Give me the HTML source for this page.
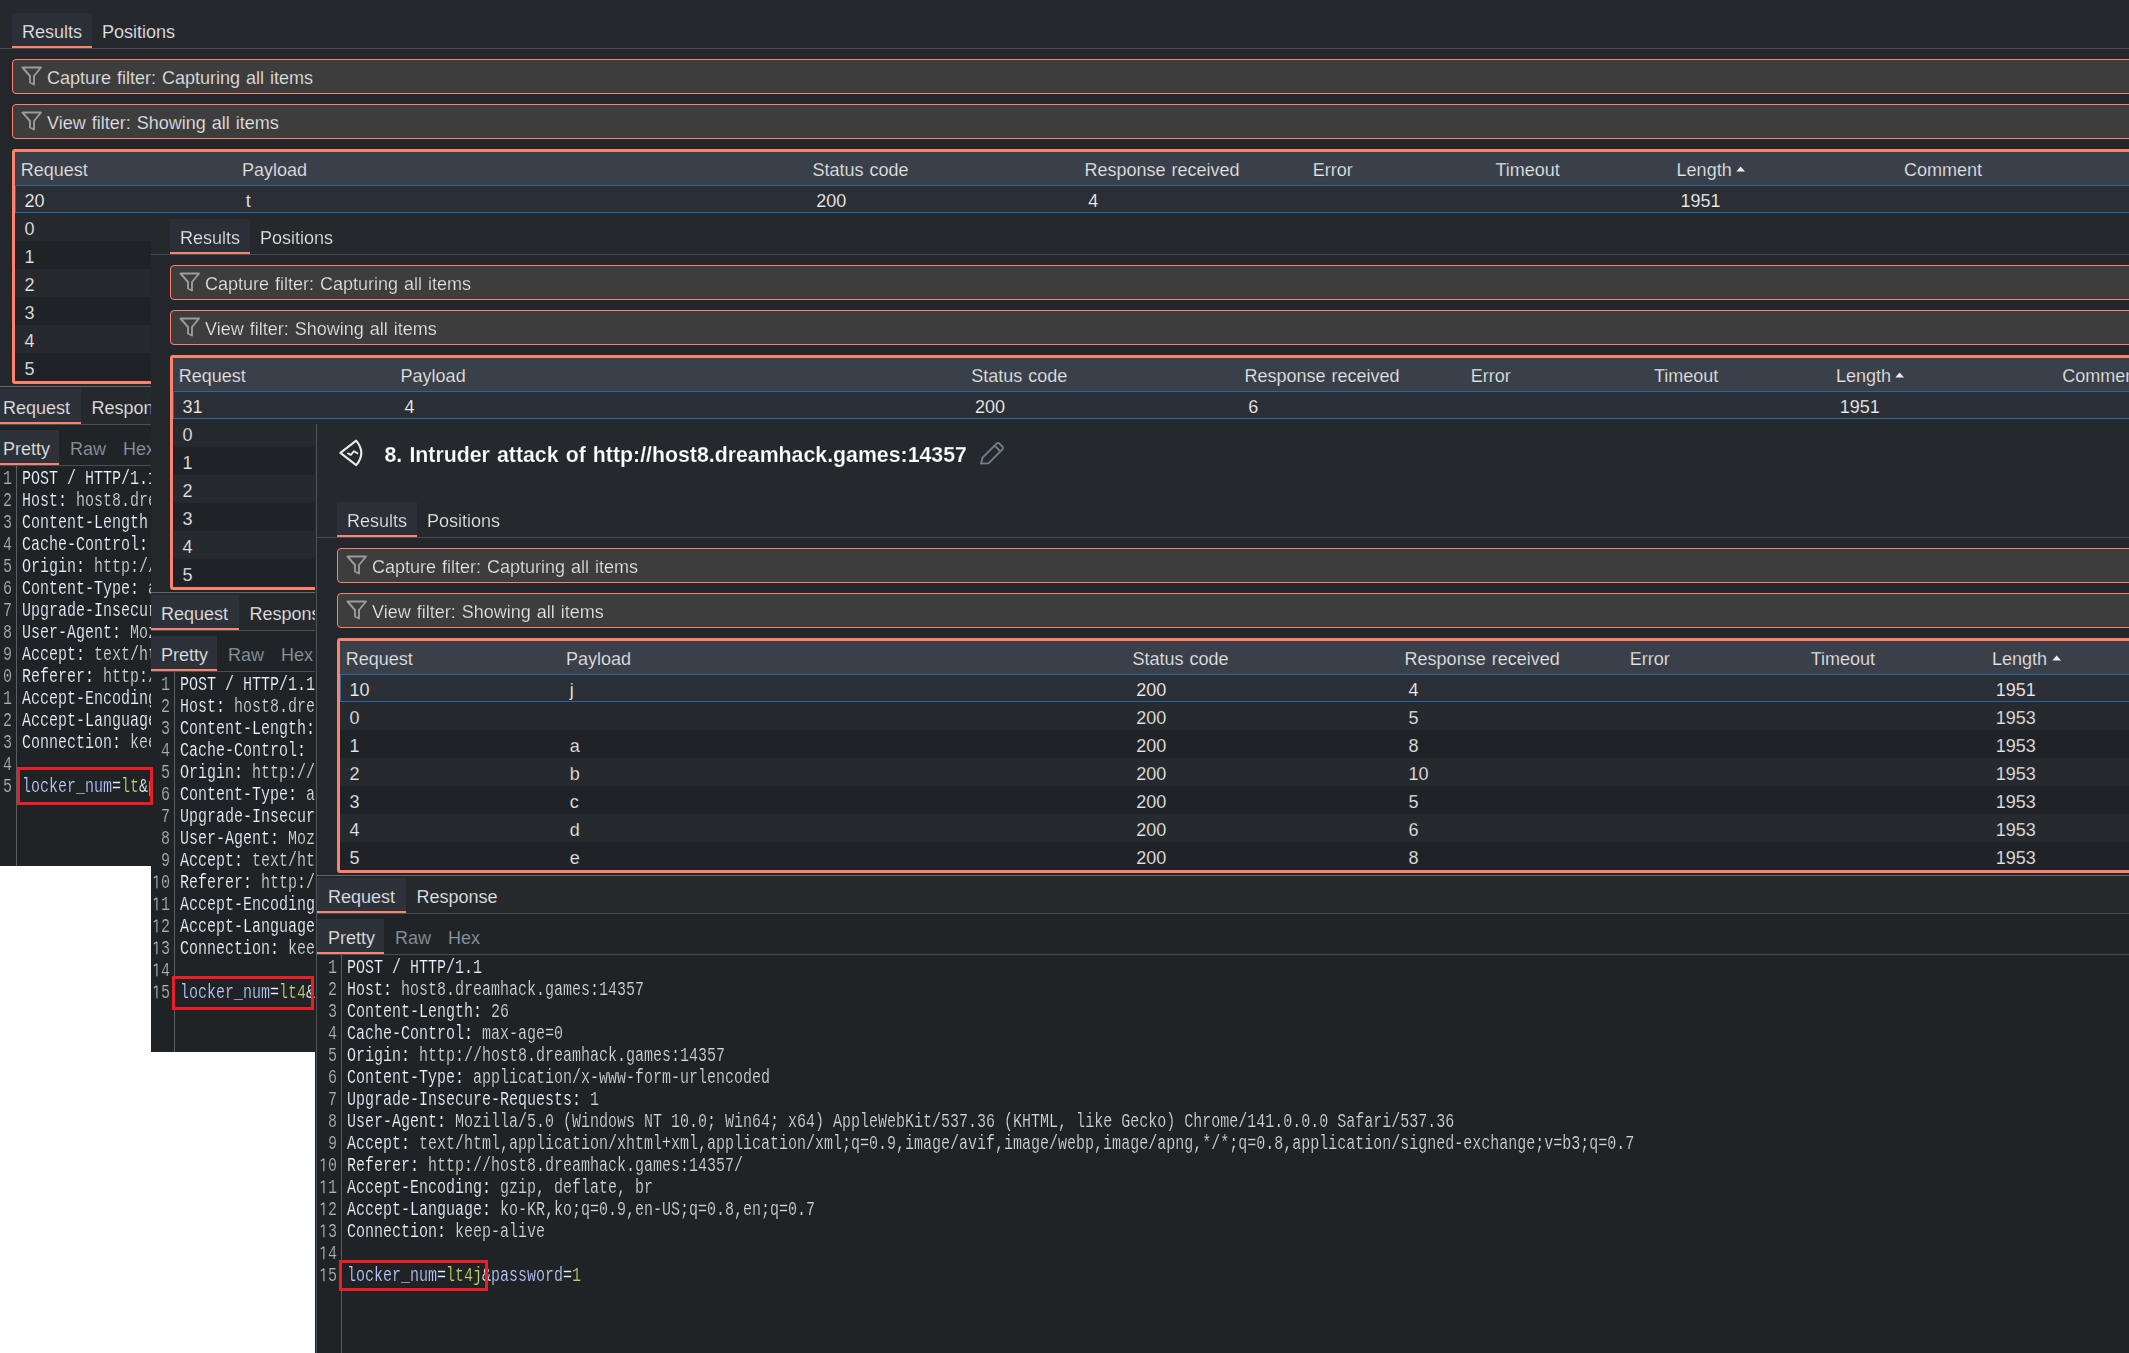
<!DOCTYPE html>
<html><head><meta charset="utf-8"><title>Intruder attack</title>
<style>html,body{margin:0;padding:0}body{width:2129px;height:1353px;position:relative;overflow:hidden;background:#ffffff}</style>
</head><body>
<div style="position:absolute;left:0px;top:0px;width:2129px;height:866px;overflow:hidden;"><div style="position:absolute;left:0px;top:0px;width:0;height:0"><div style="position:absolute;left:-20px;top:-90px;width:2300px;height:138px;background:#25292d;"></div><div style="position:absolute;left:-8px;top:48px;width:2300px;height:1px;background:#474e56;"></div><div style="position:absolute;left:-20px;top:49px;width:2300px;height:337px;background:#23272b;"></div><div style="position:absolute;left:12px;top:13px;width:80px;height:33px;background:#2b2f37;"></div><div style="position:absolute;left:12px;top:46px;width:80px;height:2px;background:#fb826c;"></div><div style="position:absolute;left:22px;top:22.76px;font:normal 18px/18px 'Liberation Sans', sans-serif;color:#e6e6e6;white-space:pre;word-spacing:1px;-webkit-text-stroke:0.25px rgba(36,40,46,0.7);">Results</div><div style="position:absolute;left:102px;top:22.76px;font:normal 18px/18px 'Liberation Sans', sans-serif;color:#e6e6e6;white-space:pre;word-spacing:1px;-webkit-text-stroke:0.25px rgba(36,40,46,0.7);">Positions</div><div style="position:absolute;left:12px;top:59px;width:2300px;height:33px;background:#3d3d3d;border:1px solid #fb826c;border-radius:4px"></div><svg style="position:absolute;left:21px;top:66px" width="22" height="20" viewBox="0 0 22 20"><path d="M1.5 1.5 H20 L13 10 V18.5 L9 16.5 V10 Z" fill="none" stroke="#9b9b9b" stroke-width="1.9" stroke-linejoin="round"/></svg><div style="position:absolute;left:47px;top:68.96px;font:normal 18px/18px 'Liberation Sans', sans-serif;color:#e6e6e6;white-space:pre;word-spacing:1px;-webkit-text-stroke:0.25px rgba(36,40,46,0.7);">Capture filter: Capturing all items</div><div style="position:absolute;left:12px;top:104px;width:2300px;height:33px;background:#3d3d3d;border:1px solid #fb826c;border-radius:4px"></div><svg style="position:absolute;left:21px;top:111px" width="22" height="20" viewBox="0 0 22 20"><path d="M1.5 1.5 H20 L13 10 V18.5 L9 16.5 V10 Z" fill="none" stroke="#9b9b9b" stroke-width="1.9" stroke-linejoin="round"/></svg><div style="position:absolute;left:47px;top:113.96px;font:normal 18px/18px 'Liberation Sans', sans-serif;color:#e6e6e6;white-space:pre;word-spacing:1px;-webkit-text-stroke:0.25px rgba(36,40,46,0.7);">View filter: Showing all items</div><div style="position:absolute;left:12px;top:149px;width:2300px;height:229px;border:3px solid #fb826c;border-radius:3px;background:#262a2e"></div><div style="position:absolute;left:15px;top:152px;width:2300px;height:33px;background:#39404a;"></div><div style="position:absolute;left:20.7px;top:160.76px;font:normal 18px/18px 'Liberation Sans', sans-serif;color:#e6e6e6;white-space:pre;word-spacing:1px;-webkit-text-stroke:0.25px rgba(36,40,46,0.7);">Request</div><div style="position:absolute;left:242px;top:160.76px;font:normal 18px/18px 'Liberation Sans', sans-serif;color:#e6e6e6;white-space:pre;word-spacing:1px;-webkit-text-stroke:0.25px rgba(36,40,46,0.7);">Payload</div><div style="position:absolute;left:812.4px;top:160.76px;font:normal 18px/18px 'Liberation Sans', sans-serif;color:#e6e6e6;white-space:pre;word-spacing:1px;-webkit-text-stroke:0.25px rgba(36,40,46,0.7);">Status code</div><div style="position:absolute;left:1084.4px;top:160.76px;font:normal 18px/18px 'Liberation Sans', sans-serif;color:#e6e6e6;white-space:pre;word-spacing:1px;-webkit-text-stroke:0.25px rgba(36,40,46,0.7);">Response received</div><div style="position:absolute;left:1312.7px;top:160.76px;font:normal 18px/18px 'Liberation Sans', sans-serif;color:#e6e6e6;white-space:pre;word-spacing:1px;-webkit-text-stroke:0.25px rgba(36,40,46,0.7);">Error</div><div style="position:absolute;left:1495.4px;top:160.76px;font:normal 18px/18px 'Liberation Sans', sans-serif;color:#e6e6e6;white-space:pre;word-spacing:1px;-webkit-text-stroke:0.25px rgba(36,40,46,0.7);">Timeout</div><div style="position:absolute;left:1676.6px;top:160.76px;font:normal 18px/18px 'Liberation Sans', sans-serif;color:#e6e6e6;white-space:pre;word-spacing:1px;-webkit-text-stroke:0.25px rgba(36,40,46,0.7);">Length</div><div style="position:absolute;left:1904px;top:160.76px;font:normal 18px/18px 'Liberation Sans', sans-serif;color:#e6e6e6;white-space:pre;word-spacing:1px;-webkit-text-stroke:0.25px rgba(36,40,46,0.7);">Comment</div><svg style="position:absolute;left:1736.1px;top:165.5px" width="10" height="7" viewBox="0 0 10 7"><path d="M0.3 5.6 L4.65 0.4 L9 5.6 Z" fill="#ececec"/></svg><div style="position:absolute;left:15px;top:185px;width:2300px;height:28px;background:#2866a5;"></div><div style="position:absolute;left:16px;top:186px;width:2300px;height:26px;background:#2a2e35;"></div><div style="position:absolute;left:24.5px;top:191.76px;font:normal 18px/18px 'Liberation Sans', sans-serif;color:#f2f2f2;white-space:pre;word-spacing:1px;-webkit-text-stroke:0.25px rgba(36,40,46,0.7);">20</div><div style="position:absolute;left:245.8px;top:191.76px;font:normal 18px/18px 'Liberation Sans', sans-serif;color:#f2f2f2;white-space:pre;word-spacing:1px;-webkit-text-stroke:0.25px rgba(36,40,46,0.7);">t</div><div style="position:absolute;left:816.1999999999999px;top:191.76px;font:normal 18px/18px 'Liberation Sans', sans-serif;color:#f2f2f2;white-space:pre;word-spacing:1px;-webkit-text-stroke:0.25px rgba(36,40,46,0.7);">200</div><div style="position:absolute;left:1088.2px;top:191.76px;font:normal 18px/18px 'Liberation Sans', sans-serif;color:#f2f2f2;white-space:pre;word-spacing:1px;-webkit-text-stroke:0.25px rgba(36,40,46,0.7);">4</div><div style="position:absolute;left:1680.3999999999999px;top:191.76px;font:normal 18px/18px 'Liberation Sans', sans-serif;color:#f2f2f2;white-space:pre;word-spacing:1px;-webkit-text-stroke:0.25px rgba(36,40,46,0.7);">1951</div><div style="position:absolute;left:15px;top:213px;width:2300px;height:28px;background:#262a2e;"></div><div style="position:absolute;left:24.5px;top:219.76px;font:normal 18px/18px 'Liberation Sans', sans-serif;color:#e6e6e6;white-space:pre;word-spacing:1px;-webkit-text-stroke:0.25px rgba(36,40,46,0.7);">0</div><div style="position:absolute;left:816.1999999999999px;top:219.76px;font:normal 18px/18px 'Liberation Sans', sans-serif;color:#e6e6e6;white-space:pre;word-spacing:1px;-webkit-text-stroke:0.25px rgba(36,40,46,0.7);">200</div><div style="position:absolute;left:1088.2px;top:219.76px;font:normal 18px/18px 'Liberation Sans', sans-serif;color:#e6e6e6;white-space:pre;word-spacing:1px;-webkit-text-stroke:0.25px rgba(36,40,46,0.7);">5</div><div style="position:absolute;left:1680.3999999999999px;top:219.76px;font:normal 18px/18px 'Liberation Sans', sans-serif;color:#e6e6e6;white-space:pre;word-spacing:1px;-webkit-text-stroke:0.25px rgba(36,40,46,0.7);">1953</div><div style="position:absolute;left:15px;top:241px;width:2300px;height:28px;background:#1f2226;"></div><div style="position:absolute;left:24.5px;top:247.76px;font:normal 18px/18px 'Liberation Sans', sans-serif;color:#e6e6e6;white-space:pre;word-spacing:1px;-webkit-text-stroke:0.25px rgba(36,40,46,0.7);">1</div><div style="position:absolute;left:245.8px;top:247.76px;font:normal 18px/18px 'Liberation Sans', sans-serif;color:#e6e6e6;white-space:pre;word-spacing:1px;-webkit-text-stroke:0.25px rgba(36,40,46,0.7);">a</div><div style="position:absolute;left:816.1999999999999px;top:247.76px;font:normal 18px/18px 'Liberation Sans', sans-serif;color:#e6e6e6;white-space:pre;word-spacing:1px;-webkit-text-stroke:0.25px rgba(36,40,46,0.7);">200</div><div style="position:absolute;left:1088.2px;top:247.76px;font:normal 18px/18px 'Liberation Sans', sans-serif;color:#e6e6e6;white-space:pre;word-spacing:1px;-webkit-text-stroke:0.25px rgba(36,40,46,0.7);">8</div><div style="position:absolute;left:1680.3999999999999px;top:247.76px;font:normal 18px/18px 'Liberation Sans', sans-serif;color:#e6e6e6;white-space:pre;word-spacing:1px;-webkit-text-stroke:0.25px rgba(36,40,46,0.7);">1953</div><div style="position:absolute;left:15px;top:269px;width:2300px;height:28px;background:#262a2e;"></div><div style="position:absolute;left:24.5px;top:275.76px;font:normal 18px/18px 'Liberation Sans', sans-serif;color:#e6e6e6;white-space:pre;word-spacing:1px;-webkit-text-stroke:0.25px rgba(36,40,46,0.7);">2</div><div style="position:absolute;left:245.8px;top:275.76px;font:normal 18px/18px 'Liberation Sans', sans-serif;color:#e6e6e6;white-space:pre;word-spacing:1px;-webkit-text-stroke:0.25px rgba(36,40,46,0.7);">b</div><div style="position:absolute;left:816.1999999999999px;top:275.76px;font:normal 18px/18px 'Liberation Sans', sans-serif;color:#e6e6e6;white-space:pre;word-spacing:1px;-webkit-text-stroke:0.25px rgba(36,40,46,0.7);">200</div><div style="position:absolute;left:1088.2px;top:275.76px;font:normal 18px/18px 'Liberation Sans', sans-serif;color:#e6e6e6;white-space:pre;word-spacing:1px;-webkit-text-stroke:0.25px rgba(36,40,46,0.7);">10</div><div style="position:absolute;left:1680.3999999999999px;top:275.76px;font:normal 18px/18px 'Liberation Sans', sans-serif;color:#e6e6e6;white-space:pre;word-spacing:1px;-webkit-text-stroke:0.25px rgba(36,40,46,0.7);">1953</div><div style="position:absolute;left:15px;top:297px;width:2300px;height:28px;background:#1f2226;"></div><div style="position:absolute;left:24.5px;top:303.76px;font:normal 18px/18px 'Liberation Sans', sans-serif;color:#e6e6e6;white-space:pre;word-spacing:1px;-webkit-text-stroke:0.25px rgba(36,40,46,0.7);">3</div><div style="position:absolute;left:245.8px;top:303.76px;font:normal 18px/18px 'Liberation Sans', sans-serif;color:#e6e6e6;white-space:pre;word-spacing:1px;-webkit-text-stroke:0.25px rgba(36,40,46,0.7);">c</div><div style="position:absolute;left:816.1999999999999px;top:303.76px;font:normal 18px/18px 'Liberation Sans', sans-serif;color:#e6e6e6;white-space:pre;word-spacing:1px;-webkit-text-stroke:0.25px rgba(36,40,46,0.7);">200</div><div style="position:absolute;left:1088.2px;top:303.76px;font:normal 18px/18px 'Liberation Sans', sans-serif;color:#e6e6e6;white-space:pre;word-spacing:1px;-webkit-text-stroke:0.25px rgba(36,40,46,0.7);">5</div><div style="position:absolute;left:1680.3999999999999px;top:303.76px;font:normal 18px/18px 'Liberation Sans', sans-serif;color:#e6e6e6;white-space:pre;word-spacing:1px;-webkit-text-stroke:0.25px rgba(36,40,46,0.7);">1953</div><div style="position:absolute;left:15px;top:325px;width:2300px;height:28px;background:#262a2e;"></div><div style="position:absolute;left:24.5px;top:331.76px;font:normal 18px/18px 'Liberation Sans', sans-serif;color:#e6e6e6;white-space:pre;word-spacing:1px;-webkit-text-stroke:0.25px rgba(36,40,46,0.7);">4</div><div style="position:absolute;left:245.8px;top:331.76px;font:normal 18px/18px 'Liberation Sans', sans-serif;color:#e6e6e6;white-space:pre;word-spacing:1px;-webkit-text-stroke:0.25px rgba(36,40,46,0.7);">d</div><div style="position:absolute;left:816.1999999999999px;top:331.76px;font:normal 18px/18px 'Liberation Sans', sans-serif;color:#e6e6e6;white-space:pre;word-spacing:1px;-webkit-text-stroke:0.25px rgba(36,40,46,0.7);">200</div><div style="position:absolute;left:1088.2px;top:331.76px;font:normal 18px/18px 'Liberation Sans', sans-serif;color:#e6e6e6;white-space:pre;word-spacing:1px;-webkit-text-stroke:0.25px rgba(36,40,46,0.7);">6</div><div style="position:absolute;left:1680.3999999999999px;top:331.76px;font:normal 18px/18px 'Liberation Sans', sans-serif;color:#e6e6e6;white-space:pre;word-spacing:1px;-webkit-text-stroke:0.25px rgba(36,40,46,0.7);">1953</div><div style="position:absolute;left:15px;top:353px;width:2300px;height:28px;background:#1f2226;"></div><div style="position:absolute;left:24.5px;top:359.76px;font:normal 18px/18px 'Liberation Sans', sans-serif;color:#e6e6e6;white-space:pre;word-spacing:1px;-webkit-text-stroke:0.25px rgba(36,40,46,0.7);">5</div><div style="position:absolute;left:245.8px;top:359.76px;font:normal 18px/18px 'Liberation Sans', sans-serif;color:#e6e6e6;white-space:pre;word-spacing:1px;-webkit-text-stroke:0.25px rgba(36,40,46,0.7);">e</div><div style="position:absolute;left:816.1999999999999px;top:359.76px;font:normal 18px/18px 'Liberation Sans', sans-serif;color:#e6e6e6;white-space:pre;word-spacing:1px;-webkit-text-stroke:0.25px rgba(36,40,46,0.7);">200</div><div style="position:absolute;left:1088.2px;top:359.76px;font:normal 18px/18px 'Liberation Sans', sans-serif;color:#e6e6e6;white-space:pre;word-spacing:1px;-webkit-text-stroke:0.25px rgba(36,40,46,0.7);">8</div><div style="position:absolute;left:1680.3999999999999px;top:359.76px;font:normal 18px/18px 'Liberation Sans', sans-serif;color:#e6e6e6;white-space:pre;word-spacing:1px;-webkit-text-stroke:0.25px rgba(36,40,46,0.7);">1953</div><div style="position:absolute;left:-20px;top:385px;width:2300px;height:1px;background:#23272b;"></div><div style="position:absolute;left:-8px;top:386px;width:2300px;height:1px;background:#66686a;"></div><div style="position:absolute;left:-20px;top:387px;width:2300px;height:37px;background:#25292c;"></div><div style="position:absolute;left:-8px;top:389px;width:89px;height:33px;background:#2d3139;"></div><div style="position:absolute;left:-8px;top:422px;width:89px;height:2px;background:#fb826c;"></div><div style="position:absolute;left:-8px;top:424px;width:2300px;height:1px;background:#474e56;"></div><div style="position:absolute;left:3px;top:399.16px;font:normal 18px/18px 'Liberation Sans', sans-serif;color:#e6e6e6;white-space:pre;word-spacing:1px;-webkit-text-stroke:0.25px rgba(36,40,46,0.7);">Request</div><div style="position:absolute;left:91.5px;top:399.16px;font:normal 18px/18px 'Liberation Sans', sans-serif;color:#e6e6e6;white-space:pre;word-spacing:1px;-webkit-text-stroke:0.25px rgba(36,40,46,0.7);">Response</div><div style="position:absolute;left:-20px;top:425px;width:2300px;height:40px;background:#202427;"></div><div style="position:absolute;left:-8px;top:430px;width:67px;height:33px;background:#2d3239;"></div><div style="position:absolute;left:-8px;top:463px;width:67px;height:2px;background:#fb826c;"></div><div style="position:absolute;left:-8px;top:465px;width:2300px;height:1px;background:#474e56;"></div><div style="position:absolute;left:3px;top:440.16px;font:normal 18px/18px 'Liberation Sans', sans-serif;color:#e6e6e6;white-space:pre;word-spacing:1px;-webkit-text-stroke:0.25px rgba(36,40,46,0.7);">Pretty</div><div style="position:absolute;left:70px;top:440.16px;font:normal 18px/18px 'Liberation Sans', sans-serif;color:#8e97a0;white-space:pre;word-spacing:1px;-webkit-text-stroke:0.25px rgba(36,40,46,0.7);">Raw</div><div style="position:absolute;left:123px;top:440.16px;font:normal 18px/18px 'Liberation Sans', sans-serif;color:#8e97a0;white-space:pre;word-spacing:1px;-webkit-text-stroke:0.25px rgba(36,40,46,0.7);">Hex</div><div style="position:absolute;left:-20px;top:466px;width:2300px;height:1200px;background:#1f2326;"></div><div style="position:absolute;left:16px;top:466px;width:1px;height:1200px;background:#5c5f62;"></div><div style="position:absolute;left:3px;top:469.28px;font:20px/20px 'Liberation Mono', monospace;white-space:pre;transform:scaleX(0.75000) translateZ(0);transform-origin:0 0;-webkit-text-stroke:0.2px #1f2326"><span style="color:#b0b0b0">1</span></div><div style="position:absolute;left:22px;top:469.28px;font:20px/20px 'Liberation Mono', monospace;white-space:pre;transform:scaleX(0.75000) translateZ(0);transform-origin:0 0;-webkit-text-stroke:0.2px #1f2326"><span style="color:#eaf4ff">POST / HTTP/1.1</span></div><div style="position:absolute;left:3px;top:491.28px;font:20px/20px 'Liberation Mono', monospace;white-space:pre;transform:scaleX(0.75000) translateZ(0);transform-origin:0 0;-webkit-text-stroke:0.2px #1f2326"><span style="color:#b0b0b0">2</span></div><div style="position:absolute;left:22px;top:491.28px;font:20px/20px 'Liberation Mono', monospace;white-space:pre;transform:scaleX(0.75000) translateZ(0);transform-origin:0 0;-webkit-text-stroke:0.2px #1f2326"><span style="color:#eaf4ff">Host: </span><span style="color:#d4d4d0">host8.dreamhack.games:14357</span></div><div style="position:absolute;left:3px;top:513.27px;font:20px/20px 'Liberation Mono', monospace;white-space:pre;transform:scaleX(0.75000) translateZ(0);transform-origin:0 0;-webkit-text-stroke:0.2px #1f2326"><span style="color:#b0b0b0">3</span></div><div style="position:absolute;left:22px;top:513.27px;font:20px/20px 'Liberation Mono', monospace;white-space:pre;transform:scaleX(0.75000) translateZ(0);transform-origin:0 0;-webkit-text-stroke:0.2px #1f2326"><span style="color:#eaf4ff">Content-Length: </span><span style="color:#d4d4d0">24</span></div><div style="position:absolute;left:3px;top:535.27px;font:20px/20px 'Liberation Mono', monospace;white-space:pre;transform:scaleX(0.75000) translateZ(0);transform-origin:0 0;-webkit-text-stroke:0.2px #1f2326"><span style="color:#b0b0b0">4</span></div><div style="position:absolute;left:22px;top:535.27px;font:20px/20px 'Liberation Mono', monospace;white-space:pre;transform:scaleX(0.75000) translateZ(0);transform-origin:0 0;-webkit-text-stroke:0.2px #1f2326"><span style="color:#eaf4ff">Cache-Control: </span><span style="color:#d4d4d0">max-age=0</span></div><div style="position:absolute;left:3px;top:557.27px;font:20px/20px 'Liberation Mono', monospace;white-space:pre;transform:scaleX(0.75000) translateZ(0);transform-origin:0 0;-webkit-text-stroke:0.2px #1f2326"><span style="color:#b0b0b0">5</span></div><div style="position:absolute;left:22px;top:557.27px;font:20px/20px 'Liberation Mono', monospace;white-space:pre;transform:scaleX(0.75000) translateZ(0);transform-origin:0 0;-webkit-text-stroke:0.2px #1f2326"><span style="color:#eaf4ff">Origin: </span><span style="color:#d4d4d0">http://host8.dreamhack.games:14357</span></div><div style="position:absolute;left:3px;top:579.27px;font:20px/20px 'Liberation Mono', monospace;white-space:pre;transform:scaleX(0.75000) translateZ(0);transform-origin:0 0;-webkit-text-stroke:0.2px #1f2326"><span style="color:#b0b0b0">6</span></div><div style="position:absolute;left:22px;top:579.27px;font:20px/20px 'Liberation Mono', monospace;white-space:pre;transform:scaleX(0.75000) translateZ(0);transform-origin:0 0;-webkit-text-stroke:0.2px #1f2326"><span style="color:#eaf4ff">Content-Type: </span><span style="color:#d4d4d0">application/x-www-form-urlencoded</span></div><div style="position:absolute;left:3px;top:601.27px;font:20px/20px 'Liberation Mono', monospace;white-space:pre;transform:scaleX(0.75000) translateZ(0);transform-origin:0 0;-webkit-text-stroke:0.2px #1f2326"><span style="color:#b0b0b0">7</span></div><div style="position:absolute;left:22px;top:601.27px;font:20px/20px 'Liberation Mono', monospace;white-space:pre;transform:scaleX(0.75000) translateZ(0);transform-origin:0 0;-webkit-text-stroke:0.2px #1f2326"><span style="color:#eaf4ff">Upgrade-Insecure-Requests: </span><span style="color:#d4d4d0">1</span></div><div style="position:absolute;left:3px;top:623.27px;font:20px/20px 'Liberation Mono', monospace;white-space:pre;transform:scaleX(0.75000) translateZ(0);transform-origin:0 0;-webkit-text-stroke:0.2px #1f2326"><span style="color:#b0b0b0">8</span></div><div style="position:absolute;left:22px;top:623.27px;font:20px/20px 'Liberation Mono', monospace;white-space:pre;transform:scaleX(0.75000) translateZ(0);transform-origin:0 0;-webkit-text-stroke:0.2px #1f2326"><span style="color:#eaf4ff">User-Agent: </span><span style="color:#d4d4d0">Mozilla/5.0 (Windows NT 10.0; Win64; x64) AppleWebKit/537.36 (KHTML, like Gecko) Chrome/141.0.0.0 Safari/537.36</span></div><div style="position:absolute;left:3px;top:645.27px;font:20px/20px 'Liberation Mono', monospace;white-space:pre;transform:scaleX(0.75000) translateZ(0);transform-origin:0 0;-webkit-text-stroke:0.2px #1f2326"><span style="color:#b0b0b0">9</span></div><div style="position:absolute;left:22px;top:645.27px;font:20px/20px 'Liberation Mono', monospace;white-space:pre;transform:scaleX(0.75000) translateZ(0);transform-origin:0 0;-webkit-text-stroke:0.2px #1f2326"><span style="color:#eaf4ff">Accept: </span><span style="color:#d4d4d0">text/html,application/xhtml+xml,application/xml;q=0.9,image/avif,image/webp,image/apng,*/*;q=0.8,application/signed-exchange;v=b3;q=0.7</span></div><div style="position:absolute;left:3px;top:667.27px;font:20px/20px 'Liberation Mono', monospace;white-space:pre;transform:scaleX(0.75000) translateZ(0);transform-origin:0 0;-webkit-text-stroke:0.2px #1f2326"><span style="color:#b0b0b0">0</span></div><svg style="position:absolute;left:-6px;top:668.8px" width="7" height="14" viewBox="0 0 7 14"><path d="M4.9 0.7 V13.2 M4.9 0.7 L1.8 3" fill="none" stroke="#b0b0b0" stroke-width="1.15"/></svg><div style="position:absolute;left:22px;top:667.27px;font:20px/20px 'Liberation Mono', monospace;white-space:pre;transform:scaleX(0.75000) translateZ(0);transform-origin:0 0;-webkit-text-stroke:0.2px #1f2326"><span style="color:#eaf4ff">Referer: </span><span style="color:#d4d4d0">http://host8.dreamhack.games:14357/</span></div><div style="position:absolute;left:3px;top:689.27px;font:20px/20px 'Liberation Mono', monospace;white-space:pre;transform:scaleX(0.75000) translateZ(0);transform-origin:0 0;-webkit-text-stroke:0.2px #1f2326"><span style="color:#b0b0b0">1</span></div><svg style="position:absolute;left:-6px;top:690.8px" width="7" height="14" viewBox="0 0 7 14"><path d="M4.9 0.7 V13.2 M4.9 0.7 L1.8 3" fill="none" stroke="#b0b0b0" stroke-width="1.15"/></svg><div style="position:absolute;left:22px;top:689.27px;font:20px/20px 'Liberation Mono', monospace;white-space:pre;transform:scaleX(0.75000) translateZ(0);transform-origin:0 0;-webkit-text-stroke:0.2px #1f2326"><span style="color:#eaf4ff">Accept-Encoding: </span><span style="color:#d4d4d0">gzip, deflate, br</span></div><div style="position:absolute;left:3px;top:711.27px;font:20px/20px 'Liberation Mono', monospace;white-space:pre;transform:scaleX(0.75000) translateZ(0);transform-origin:0 0;-webkit-text-stroke:0.2px #1f2326"><span style="color:#b0b0b0">2</span></div><svg style="position:absolute;left:-6px;top:712.8px" width="7" height="14" viewBox="0 0 7 14"><path d="M4.9 0.7 V13.2 M4.9 0.7 L1.8 3" fill="none" stroke="#b0b0b0" stroke-width="1.15"/></svg><div style="position:absolute;left:22px;top:711.27px;font:20px/20px 'Liberation Mono', monospace;white-space:pre;transform:scaleX(0.75000) translateZ(0);transform-origin:0 0;-webkit-text-stroke:0.2px #1f2326"><span style="color:#eaf4ff">Accept-Language: </span><span style="color:#d4d4d0">ko-KR,ko;q=0.9,en-US;q=0.8,en;q=0.7</span></div><div style="position:absolute;left:3px;top:733.27px;font:20px/20px 'Liberation Mono', monospace;white-space:pre;transform:scaleX(0.75000) translateZ(0);transform-origin:0 0;-webkit-text-stroke:0.2px #1f2326"><span style="color:#b0b0b0">3</span></div><svg style="position:absolute;left:-6px;top:734.8px" width="7" height="14" viewBox="0 0 7 14"><path d="M4.9 0.7 V13.2 M4.9 0.7 L1.8 3" fill="none" stroke="#b0b0b0" stroke-width="1.15"/></svg><div style="position:absolute;left:22px;top:733.27px;font:20px/20px 'Liberation Mono', monospace;white-space:pre;transform:scaleX(0.75000) translateZ(0);transform-origin:0 0;-webkit-text-stroke:0.2px #1f2326"><span style="color:#eaf4ff">Connection: </span><span style="color:#d4d4d0">keep-alive</span></div><div style="position:absolute;left:3px;top:755.27px;font:20px/20px 'Liberation Mono', monospace;white-space:pre;transform:scaleX(0.75000) translateZ(0);transform-origin:0 0;-webkit-text-stroke:0.2px #1f2326"><span style="color:#b0b0b0">4</span></div><svg style="position:absolute;left:-6px;top:756.8px" width="7" height="14" viewBox="0 0 7 14"><path d="M4.9 0.7 V13.2 M4.9 0.7 L1.8 3" fill="none" stroke="#b0b0b0" stroke-width="1.15"/></svg><div style="position:absolute;left:3px;top:777.27px;font:20px/20px 'Liberation Mono', monospace;white-space:pre;transform:scaleX(0.75000) translateZ(0);transform-origin:0 0;-webkit-text-stroke:0.2px #1f2326"><span style="color:#b0b0b0">5</span></div><svg style="position:absolute;left:-6px;top:778.8px" width="7" height="14" viewBox="0 0 7 14"><path d="M4.9 0.7 V13.2 M4.9 0.7 L1.8 3" fill="none" stroke="#b0b0b0" stroke-width="1.15"/></svg><div style="position:absolute;left:22px;top:777.27px;font:20px/20px 'Liberation Mono', monospace;white-space:pre;transform:scaleX(0.75000) translateZ(0);transform-origin:0 0;-webkit-text-stroke:0.2px #1f2326"><span style="color:#bcc8fa">locker_num</span><span style="color:#e8f0f8">=</span><span style="color:#bdd36a">lt</span><span style="color:#e8f0f8">&amp;</span><span style="color:#bcc8fa">password</span><span style="color:#e8f0f8">=</span><span style="color:#bdd36a">1</span></div></div></div><div style="position:absolute;left:151px;top:214px;width:1978px;height:838px;overflow:hidden;"><div style="position:absolute;left:7px;top:-8px;width:0;height:0"><div style="position:absolute;left:-20px;top:-90px;width:2300px;height:138px;background:#25292d;"></div><div style="position:absolute;left:-8px;top:48px;width:2300px;height:1px;background:#474e56;"></div><div style="position:absolute;left:-20px;top:49px;width:2300px;height:337px;background:#23272b;"></div><div style="position:absolute;left:12px;top:13px;width:80px;height:33px;background:#2b2f37;"></div><div style="position:absolute;left:12px;top:46px;width:80px;height:2px;background:#fb826c;"></div><div style="position:absolute;left:22px;top:22.76px;font:normal 18px/18px 'Liberation Sans', sans-serif;color:#e6e6e6;white-space:pre;word-spacing:1px;-webkit-text-stroke:0.25px rgba(36,40,46,0.7);">Results</div><div style="position:absolute;left:102px;top:22.76px;font:normal 18px/18px 'Liberation Sans', sans-serif;color:#e6e6e6;white-space:pre;word-spacing:1px;-webkit-text-stroke:0.25px rgba(36,40,46,0.7);">Positions</div><div style="position:absolute;left:12px;top:59px;width:2300px;height:33px;background:#3d3d3d;border:1px solid #fb826c;border-radius:4px"></div><svg style="position:absolute;left:21px;top:66px" width="22" height="20" viewBox="0 0 22 20"><path d="M1.5 1.5 H20 L13 10 V18.5 L9 16.5 V10 Z" fill="none" stroke="#9b9b9b" stroke-width="1.9" stroke-linejoin="round"/></svg><div style="position:absolute;left:47px;top:68.96px;font:normal 18px/18px 'Liberation Sans', sans-serif;color:#e6e6e6;white-space:pre;word-spacing:1px;-webkit-text-stroke:0.25px rgba(36,40,46,0.7);">Capture filter: Capturing all items</div><div style="position:absolute;left:12px;top:104px;width:2300px;height:33px;background:#3d3d3d;border:1px solid #fb826c;border-radius:4px"></div><svg style="position:absolute;left:21px;top:111px" width="22" height="20" viewBox="0 0 22 20"><path d="M1.5 1.5 H20 L13 10 V18.5 L9 16.5 V10 Z" fill="none" stroke="#9b9b9b" stroke-width="1.9" stroke-linejoin="round"/></svg><div style="position:absolute;left:47px;top:113.96px;font:normal 18px/18px 'Liberation Sans', sans-serif;color:#e6e6e6;white-space:pre;word-spacing:1px;-webkit-text-stroke:0.25px rgba(36,40,46,0.7);">View filter: Showing all items</div><div style="position:absolute;left:12px;top:149px;width:2300px;height:229px;border:3px solid #fb826c;border-radius:3px;background:#262a2e"></div><div style="position:absolute;left:15px;top:152px;width:2300px;height:33px;background:#39404a;"></div><div style="position:absolute;left:20.7px;top:160.76px;font:normal 18px/18px 'Liberation Sans', sans-serif;color:#e6e6e6;white-space:pre;word-spacing:1px;-webkit-text-stroke:0.25px rgba(36,40,46,0.7);">Request</div><div style="position:absolute;left:242.6px;top:160.76px;font:normal 18px/18px 'Liberation Sans', sans-serif;color:#e6e6e6;white-space:pre;word-spacing:1px;-webkit-text-stroke:0.25px rgba(36,40,46,0.7);">Payload</div><div style="position:absolute;left:813.3px;top:160.76px;font:normal 18px/18px 'Liberation Sans', sans-serif;color:#e6e6e6;white-space:pre;word-spacing:1px;-webkit-text-stroke:0.25px rgba(36,40,46,0.7);">Status code</div><div style="position:absolute;left:1086.4px;top:160.76px;font:normal 18px/18px 'Liberation Sans', sans-serif;color:#e6e6e6;white-space:pre;word-spacing:1px;-webkit-text-stroke:0.25px rgba(36,40,46,0.7);">Response received</div><div style="position:absolute;left:1312.7px;top:160.76px;font:normal 18px/18px 'Liberation Sans', sans-serif;color:#e6e6e6;white-space:pre;word-spacing:1px;-webkit-text-stroke:0.25px rgba(36,40,46,0.7);">Error</div><div style="position:absolute;left:1496px;top:160.76px;font:normal 18px/18px 'Liberation Sans', sans-serif;color:#e6e6e6;white-space:pre;word-spacing:1px;-webkit-text-stroke:0.25px rgba(36,40,46,0.7);">Timeout</div><div style="position:absolute;left:1677.9px;top:160.76px;font:normal 18px/18px 'Liberation Sans', sans-serif;color:#e6e6e6;white-space:pre;word-spacing:1px;-webkit-text-stroke:0.25px rgba(36,40,46,0.7);">Length</div><div style="position:absolute;left:1904.2px;top:160.76px;font:normal 18px/18px 'Liberation Sans', sans-serif;color:#e6e6e6;white-space:pre;word-spacing:1px;-webkit-text-stroke:0.25px rgba(36,40,46,0.7);">Comment</div><svg style="position:absolute;left:1737.4px;top:165.5px" width="10" height="7" viewBox="0 0 10 7"><path d="M0.3 5.6 L4.65 0.4 L9 5.6 Z" fill="#ececec"/></svg><div style="position:absolute;left:15px;top:185px;width:2300px;height:28px;background:#2866a5;"></div><div style="position:absolute;left:16px;top:186px;width:2300px;height:26px;background:#2a2e35;"></div><div style="position:absolute;left:24.5px;top:191.76px;font:normal 18px/18px 'Liberation Sans', sans-serif;color:#f2f2f2;white-space:pre;word-spacing:1px;-webkit-text-stroke:0.25px rgba(36,40,46,0.7);">31</div><div style="position:absolute;left:246.4px;top:191.76px;font:normal 18px/18px 'Liberation Sans', sans-serif;color:#f2f2f2;white-space:pre;word-spacing:1px;-webkit-text-stroke:0.25px rgba(36,40,46,0.7);">4</div><div style="position:absolute;left:817.0999999999999px;top:191.76px;font:normal 18px/18px 'Liberation Sans', sans-serif;color:#f2f2f2;white-space:pre;word-spacing:1px;-webkit-text-stroke:0.25px rgba(36,40,46,0.7);">200</div><div style="position:absolute;left:1090.2px;top:191.76px;font:normal 18px/18px 'Liberation Sans', sans-serif;color:#f2f2f2;white-space:pre;word-spacing:1px;-webkit-text-stroke:0.25px rgba(36,40,46,0.7);">6</div><div style="position:absolute;left:1681.7px;top:191.76px;font:normal 18px/18px 'Liberation Sans', sans-serif;color:#f2f2f2;white-space:pre;word-spacing:1px;-webkit-text-stroke:0.25px rgba(36,40,46,0.7);">1951</div><div style="position:absolute;left:15px;top:213px;width:2300px;height:28px;background:#262a2e;"></div><div style="position:absolute;left:24.5px;top:219.76px;font:normal 18px/18px 'Liberation Sans', sans-serif;color:#e6e6e6;white-space:pre;word-spacing:1px;-webkit-text-stroke:0.25px rgba(36,40,46,0.7);">0</div><div style="position:absolute;left:817.0999999999999px;top:219.76px;font:normal 18px/18px 'Liberation Sans', sans-serif;color:#e6e6e6;white-space:pre;word-spacing:1px;-webkit-text-stroke:0.25px rgba(36,40,46,0.7);">200</div><div style="position:absolute;left:1090.2px;top:219.76px;font:normal 18px/18px 'Liberation Sans', sans-serif;color:#e6e6e6;white-space:pre;word-spacing:1px;-webkit-text-stroke:0.25px rgba(36,40,46,0.7);">5</div><div style="position:absolute;left:1681.7px;top:219.76px;font:normal 18px/18px 'Liberation Sans', sans-serif;color:#e6e6e6;white-space:pre;word-spacing:1px;-webkit-text-stroke:0.25px rgba(36,40,46,0.7);">1953</div><div style="position:absolute;left:15px;top:241px;width:2300px;height:28px;background:#1f2226;"></div><div style="position:absolute;left:24.5px;top:247.76px;font:normal 18px/18px 'Liberation Sans', sans-serif;color:#e6e6e6;white-space:pre;word-spacing:1px;-webkit-text-stroke:0.25px rgba(36,40,46,0.7);">1</div><div style="position:absolute;left:246.4px;top:247.76px;font:normal 18px/18px 'Liberation Sans', sans-serif;color:#e6e6e6;white-space:pre;word-spacing:1px;-webkit-text-stroke:0.25px rgba(36,40,46,0.7);">a</div><div style="position:absolute;left:817.0999999999999px;top:247.76px;font:normal 18px/18px 'Liberation Sans', sans-serif;color:#e6e6e6;white-space:pre;word-spacing:1px;-webkit-text-stroke:0.25px rgba(36,40,46,0.7);">200</div><div style="position:absolute;left:1090.2px;top:247.76px;font:normal 18px/18px 'Liberation Sans', sans-serif;color:#e6e6e6;white-space:pre;word-spacing:1px;-webkit-text-stroke:0.25px rgba(36,40,46,0.7);">8</div><div style="position:absolute;left:1681.7px;top:247.76px;font:normal 18px/18px 'Liberation Sans', sans-serif;color:#e6e6e6;white-space:pre;word-spacing:1px;-webkit-text-stroke:0.25px rgba(36,40,46,0.7);">1953</div><div style="position:absolute;left:15px;top:269px;width:2300px;height:28px;background:#262a2e;"></div><div style="position:absolute;left:24.5px;top:275.76px;font:normal 18px/18px 'Liberation Sans', sans-serif;color:#e6e6e6;white-space:pre;word-spacing:1px;-webkit-text-stroke:0.25px rgba(36,40,46,0.7);">2</div><div style="position:absolute;left:246.4px;top:275.76px;font:normal 18px/18px 'Liberation Sans', sans-serif;color:#e6e6e6;white-space:pre;word-spacing:1px;-webkit-text-stroke:0.25px rgba(36,40,46,0.7);">b</div><div style="position:absolute;left:817.0999999999999px;top:275.76px;font:normal 18px/18px 'Liberation Sans', sans-serif;color:#e6e6e6;white-space:pre;word-spacing:1px;-webkit-text-stroke:0.25px rgba(36,40,46,0.7);">200</div><div style="position:absolute;left:1090.2px;top:275.76px;font:normal 18px/18px 'Liberation Sans', sans-serif;color:#e6e6e6;white-space:pre;word-spacing:1px;-webkit-text-stroke:0.25px rgba(36,40,46,0.7);">10</div><div style="position:absolute;left:1681.7px;top:275.76px;font:normal 18px/18px 'Liberation Sans', sans-serif;color:#e6e6e6;white-space:pre;word-spacing:1px;-webkit-text-stroke:0.25px rgba(36,40,46,0.7);">1953</div><div style="position:absolute;left:15px;top:297px;width:2300px;height:28px;background:#1f2226;"></div><div style="position:absolute;left:24.5px;top:303.76px;font:normal 18px/18px 'Liberation Sans', sans-serif;color:#e6e6e6;white-space:pre;word-spacing:1px;-webkit-text-stroke:0.25px rgba(36,40,46,0.7);">3</div><div style="position:absolute;left:246.4px;top:303.76px;font:normal 18px/18px 'Liberation Sans', sans-serif;color:#e6e6e6;white-space:pre;word-spacing:1px;-webkit-text-stroke:0.25px rgba(36,40,46,0.7);">c</div><div style="position:absolute;left:817.0999999999999px;top:303.76px;font:normal 18px/18px 'Liberation Sans', sans-serif;color:#e6e6e6;white-space:pre;word-spacing:1px;-webkit-text-stroke:0.25px rgba(36,40,46,0.7);">200</div><div style="position:absolute;left:1090.2px;top:303.76px;font:normal 18px/18px 'Liberation Sans', sans-serif;color:#e6e6e6;white-space:pre;word-spacing:1px;-webkit-text-stroke:0.25px rgba(36,40,46,0.7);">5</div><div style="position:absolute;left:1681.7px;top:303.76px;font:normal 18px/18px 'Liberation Sans', sans-serif;color:#e6e6e6;white-space:pre;word-spacing:1px;-webkit-text-stroke:0.25px rgba(36,40,46,0.7);">1953</div><div style="position:absolute;left:15px;top:325px;width:2300px;height:28px;background:#262a2e;"></div><div style="position:absolute;left:24.5px;top:331.76px;font:normal 18px/18px 'Liberation Sans', sans-serif;color:#e6e6e6;white-space:pre;word-spacing:1px;-webkit-text-stroke:0.25px rgba(36,40,46,0.7);">4</div><div style="position:absolute;left:246.4px;top:331.76px;font:normal 18px/18px 'Liberation Sans', sans-serif;color:#e6e6e6;white-space:pre;word-spacing:1px;-webkit-text-stroke:0.25px rgba(36,40,46,0.7);">d</div><div style="position:absolute;left:817.0999999999999px;top:331.76px;font:normal 18px/18px 'Liberation Sans', sans-serif;color:#e6e6e6;white-space:pre;word-spacing:1px;-webkit-text-stroke:0.25px rgba(36,40,46,0.7);">200</div><div style="position:absolute;left:1090.2px;top:331.76px;font:normal 18px/18px 'Liberation Sans', sans-serif;color:#e6e6e6;white-space:pre;word-spacing:1px;-webkit-text-stroke:0.25px rgba(36,40,46,0.7);">6</div><div style="position:absolute;left:1681.7px;top:331.76px;font:normal 18px/18px 'Liberation Sans', sans-serif;color:#e6e6e6;white-space:pre;word-spacing:1px;-webkit-text-stroke:0.25px rgba(36,40,46,0.7);">1953</div><div style="position:absolute;left:15px;top:353px;width:2300px;height:28px;background:#1f2226;"></div><div style="position:absolute;left:24.5px;top:359.76px;font:normal 18px/18px 'Liberation Sans', sans-serif;color:#e6e6e6;white-space:pre;word-spacing:1px;-webkit-text-stroke:0.25px rgba(36,40,46,0.7);">5</div><div style="position:absolute;left:246.4px;top:359.76px;font:normal 18px/18px 'Liberation Sans', sans-serif;color:#e6e6e6;white-space:pre;word-spacing:1px;-webkit-text-stroke:0.25px rgba(36,40,46,0.7);">e</div><div style="position:absolute;left:817.0999999999999px;top:359.76px;font:normal 18px/18px 'Liberation Sans', sans-serif;color:#e6e6e6;white-space:pre;word-spacing:1px;-webkit-text-stroke:0.25px rgba(36,40,46,0.7);">200</div><div style="position:absolute;left:1090.2px;top:359.76px;font:normal 18px/18px 'Liberation Sans', sans-serif;color:#e6e6e6;white-space:pre;word-spacing:1px;-webkit-text-stroke:0.25px rgba(36,40,46,0.7);">8</div><div style="position:absolute;left:1681.7px;top:359.76px;font:normal 18px/18px 'Liberation Sans', sans-serif;color:#e6e6e6;white-space:pre;word-spacing:1px;-webkit-text-stroke:0.25px rgba(36,40,46,0.7);">1953</div><div style="position:absolute;left:-20px;top:385px;width:2300px;height:1px;background:#23272b;"></div><div style="position:absolute;left:-8px;top:386px;width:2300px;height:1px;background:#66686a;"></div><div style="position:absolute;left:-20px;top:387px;width:2300px;height:37px;background:#25292c;"></div><div style="position:absolute;left:-8px;top:389px;width:89px;height:33px;background:#2d3139;"></div><div style="position:absolute;left:-8px;top:422px;width:89px;height:2px;background:#fb826c;"></div><div style="position:absolute;left:-8px;top:424px;width:2300px;height:1px;background:#474e56;"></div><div style="position:absolute;left:3px;top:399.16px;font:normal 18px/18px 'Liberation Sans', sans-serif;color:#e6e6e6;white-space:pre;word-spacing:1px;-webkit-text-stroke:0.25px rgba(36,40,46,0.7);">Request</div><div style="position:absolute;left:91.5px;top:399.16px;font:normal 18px/18px 'Liberation Sans', sans-serif;color:#e6e6e6;white-space:pre;word-spacing:1px;-webkit-text-stroke:0.25px rgba(36,40,46,0.7);">Response</div><div style="position:absolute;left:-20px;top:425px;width:2300px;height:40px;background:#202427;"></div><div style="position:absolute;left:-8px;top:430px;width:67px;height:33px;background:#2d3239;"></div><div style="position:absolute;left:-8px;top:463px;width:67px;height:2px;background:#fb826c;"></div><div style="position:absolute;left:-8px;top:465px;width:2300px;height:1px;background:#474e56;"></div><div style="position:absolute;left:3px;top:440.16px;font:normal 18px/18px 'Liberation Sans', sans-serif;color:#e6e6e6;white-space:pre;word-spacing:1px;-webkit-text-stroke:0.25px rgba(36,40,46,0.7);">Pretty</div><div style="position:absolute;left:70px;top:440.16px;font:normal 18px/18px 'Liberation Sans', sans-serif;color:#8e97a0;white-space:pre;word-spacing:1px;-webkit-text-stroke:0.25px rgba(36,40,46,0.7);">Raw</div><div style="position:absolute;left:123px;top:440.16px;font:normal 18px/18px 'Liberation Sans', sans-serif;color:#8e97a0;white-space:pre;word-spacing:1px;-webkit-text-stroke:0.25px rgba(36,40,46,0.7);">Hex</div><div style="position:absolute;left:-20px;top:466px;width:2300px;height:1200px;background:#1f2326;"></div><div style="position:absolute;left:16px;top:466px;width:1px;height:1200px;background:#5c5f62;"></div><div style="position:absolute;left:3px;top:469.28px;font:20px/20px 'Liberation Mono', monospace;white-space:pre;transform:scaleX(0.75000) translateZ(0);transform-origin:0 0;-webkit-text-stroke:0.2px #1f2326"><span style="color:#b0b0b0">1</span></div><div style="position:absolute;left:22px;top:469.28px;font:20px/20px 'Liberation Mono', monospace;white-space:pre;transform:scaleX(0.75000) translateZ(0);transform-origin:0 0;-webkit-text-stroke:0.2px #1f2326"><span style="color:#eaf4ff">POST / HTTP/1.1</span></div><div style="position:absolute;left:3px;top:491.28px;font:20px/20px 'Liberation Mono', monospace;white-space:pre;transform:scaleX(0.75000) translateZ(0);transform-origin:0 0;-webkit-text-stroke:0.2px #1f2326"><span style="color:#b0b0b0">2</span></div><div style="position:absolute;left:22px;top:491.28px;font:20px/20px 'Liberation Mono', monospace;white-space:pre;transform:scaleX(0.75000) translateZ(0);transform-origin:0 0;-webkit-text-stroke:0.2px #1f2326"><span style="color:#eaf4ff">Host: </span><span style="color:#d4d4d0">host8.dreamhack.games:14357</span></div><div style="position:absolute;left:3px;top:513.27px;font:20px/20px 'Liberation Mono', monospace;white-space:pre;transform:scaleX(0.75000) translateZ(0);transform-origin:0 0;-webkit-text-stroke:0.2px #1f2326"><span style="color:#b0b0b0">3</span></div><div style="position:absolute;left:22px;top:513.27px;font:20px/20px 'Liberation Mono', monospace;white-space:pre;transform:scaleX(0.75000) translateZ(0);transform-origin:0 0;-webkit-text-stroke:0.2px #1f2326"><span style="color:#eaf4ff">Content-Length: </span><span style="color:#d4d4d0">25</span></div><div style="position:absolute;left:3px;top:535.27px;font:20px/20px 'Liberation Mono', monospace;white-space:pre;transform:scaleX(0.75000) translateZ(0);transform-origin:0 0;-webkit-text-stroke:0.2px #1f2326"><span style="color:#b0b0b0">4</span></div><div style="position:absolute;left:22px;top:535.27px;font:20px/20px 'Liberation Mono', monospace;white-space:pre;transform:scaleX(0.75000) translateZ(0);transform-origin:0 0;-webkit-text-stroke:0.2px #1f2326"><span style="color:#eaf4ff">Cache-Control: </span><span style="color:#d4d4d0">max-age=0</span></div><div style="position:absolute;left:3px;top:557.27px;font:20px/20px 'Liberation Mono', monospace;white-space:pre;transform:scaleX(0.75000) translateZ(0);transform-origin:0 0;-webkit-text-stroke:0.2px #1f2326"><span style="color:#b0b0b0">5</span></div><div style="position:absolute;left:22px;top:557.27px;font:20px/20px 'Liberation Mono', monospace;white-space:pre;transform:scaleX(0.75000) translateZ(0);transform-origin:0 0;-webkit-text-stroke:0.2px #1f2326"><span style="color:#eaf4ff">Origin: </span><span style="color:#d4d4d0">http://host8.dreamhack.games:14357</span></div><div style="position:absolute;left:3px;top:579.27px;font:20px/20px 'Liberation Mono', monospace;white-space:pre;transform:scaleX(0.75000) translateZ(0);transform-origin:0 0;-webkit-text-stroke:0.2px #1f2326"><span style="color:#b0b0b0">6</span></div><div style="position:absolute;left:22px;top:579.27px;font:20px/20px 'Liberation Mono', monospace;white-space:pre;transform:scaleX(0.75000) translateZ(0);transform-origin:0 0;-webkit-text-stroke:0.2px #1f2326"><span style="color:#eaf4ff">Content-Type: </span><span style="color:#d4d4d0">application/x-www-form-urlencoded</span></div><div style="position:absolute;left:3px;top:601.27px;font:20px/20px 'Liberation Mono', monospace;white-space:pre;transform:scaleX(0.75000) translateZ(0);transform-origin:0 0;-webkit-text-stroke:0.2px #1f2326"><span style="color:#b0b0b0">7</span></div><div style="position:absolute;left:22px;top:601.27px;font:20px/20px 'Liberation Mono', monospace;white-space:pre;transform:scaleX(0.75000) translateZ(0);transform-origin:0 0;-webkit-text-stroke:0.2px #1f2326"><span style="color:#eaf4ff">Upgrade-Insecure-Requests: </span><span style="color:#d4d4d0">1</span></div><div style="position:absolute;left:3px;top:623.27px;font:20px/20px 'Liberation Mono', monospace;white-space:pre;transform:scaleX(0.75000) translateZ(0);transform-origin:0 0;-webkit-text-stroke:0.2px #1f2326"><span style="color:#b0b0b0">8</span></div><div style="position:absolute;left:22px;top:623.27px;font:20px/20px 'Liberation Mono', monospace;white-space:pre;transform:scaleX(0.75000) translateZ(0);transform-origin:0 0;-webkit-text-stroke:0.2px #1f2326"><span style="color:#eaf4ff">User-Agent: </span><span style="color:#d4d4d0">Mozilla/5.0 (Windows NT 10.0; Win64; x64) AppleWebKit/537.36 (KHTML, like Gecko) Chrome/141.0.0.0 Safari/537.36</span></div><div style="position:absolute;left:3px;top:645.27px;font:20px/20px 'Liberation Mono', monospace;white-space:pre;transform:scaleX(0.75000) translateZ(0);transform-origin:0 0;-webkit-text-stroke:0.2px #1f2326"><span style="color:#b0b0b0">9</span></div><div style="position:absolute;left:22px;top:645.27px;font:20px/20px 'Liberation Mono', monospace;white-space:pre;transform:scaleX(0.75000) translateZ(0);transform-origin:0 0;-webkit-text-stroke:0.2px #1f2326"><span style="color:#eaf4ff">Accept: </span><span style="color:#d4d4d0">text/html,application/xhtml+xml,application/xml;q=0.9,image/avif,image/webp,image/apng,*/*;q=0.8,application/signed-exchange;v=b3;q=0.7</span></div><div style="position:absolute;left:3px;top:667.27px;font:20px/20px 'Liberation Mono', monospace;white-space:pre;transform:scaleX(0.75000) translateZ(0);transform-origin:0 0;-webkit-text-stroke:0.2px #1f2326"><span style="color:#b0b0b0">0</span></div><svg style="position:absolute;left:-6px;top:668.8px" width="7" height="14" viewBox="0 0 7 14"><path d="M4.9 0.7 V13.2 M4.9 0.7 L1.8 3" fill="none" stroke="#b0b0b0" stroke-width="1.15"/></svg><div style="position:absolute;left:22px;top:667.27px;font:20px/20px 'Liberation Mono', monospace;white-space:pre;transform:scaleX(0.75000) translateZ(0);transform-origin:0 0;-webkit-text-stroke:0.2px #1f2326"><span style="color:#eaf4ff">Referer: </span><span style="color:#d4d4d0">http://host8.dreamhack.games:14357/</span></div><div style="position:absolute;left:3px;top:689.27px;font:20px/20px 'Liberation Mono', monospace;white-space:pre;transform:scaleX(0.75000) translateZ(0);transform-origin:0 0;-webkit-text-stroke:0.2px #1f2326"><span style="color:#b0b0b0">1</span></div><svg style="position:absolute;left:-6px;top:690.8px" width="7" height="14" viewBox="0 0 7 14"><path d="M4.9 0.7 V13.2 M4.9 0.7 L1.8 3" fill="none" stroke="#b0b0b0" stroke-width="1.15"/></svg><div style="position:absolute;left:22px;top:689.27px;font:20px/20px 'Liberation Mono', monospace;white-space:pre;transform:scaleX(0.75000) translateZ(0);transform-origin:0 0;-webkit-text-stroke:0.2px #1f2326"><span style="color:#eaf4ff">Accept-Encoding: </span><span style="color:#d4d4d0">gzip, deflate, br</span></div><div style="position:absolute;left:3px;top:711.27px;font:20px/20px 'Liberation Mono', monospace;white-space:pre;transform:scaleX(0.75000) translateZ(0);transform-origin:0 0;-webkit-text-stroke:0.2px #1f2326"><span style="color:#b0b0b0">2</span></div><svg style="position:absolute;left:-6px;top:712.8px" width="7" height="14" viewBox="0 0 7 14"><path d="M4.9 0.7 V13.2 M4.9 0.7 L1.8 3" fill="none" stroke="#b0b0b0" stroke-width="1.15"/></svg><div style="position:absolute;left:22px;top:711.27px;font:20px/20px 'Liberation Mono', monospace;white-space:pre;transform:scaleX(0.75000) translateZ(0);transform-origin:0 0;-webkit-text-stroke:0.2px #1f2326"><span style="color:#eaf4ff">Accept-Language: </span><span style="color:#d4d4d0">ko-KR,ko;q=0.9,en-US;q=0.8,en;q=0.7</span></div><div style="position:absolute;left:3px;top:733.27px;font:20px/20px 'Liberation Mono', monospace;white-space:pre;transform:scaleX(0.75000) translateZ(0);transform-origin:0 0;-webkit-text-stroke:0.2px #1f2326"><span style="color:#b0b0b0">3</span></div><svg style="position:absolute;left:-6px;top:734.8px" width="7" height="14" viewBox="0 0 7 14"><path d="M4.9 0.7 V13.2 M4.9 0.7 L1.8 3" fill="none" stroke="#b0b0b0" stroke-width="1.15"/></svg><div style="position:absolute;left:22px;top:733.27px;font:20px/20px 'Liberation Mono', monospace;white-space:pre;transform:scaleX(0.75000) translateZ(0);transform-origin:0 0;-webkit-text-stroke:0.2px #1f2326"><span style="color:#eaf4ff">Connection: </span><span style="color:#d4d4d0">keep-alive</span></div><div style="position:absolute;left:3px;top:755.27px;font:20px/20px 'Liberation Mono', monospace;white-space:pre;transform:scaleX(0.75000) translateZ(0);transform-origin:0 0;-webkit-text-stroke:0.2px #1f2326"><span style="color:#b0b0b0">4</span></div><svg style="position:absolute;left:-6px;top:756.8px" width="7" height="14" viewBox="0 0 7 14"><path d="M4.9 0.7 V13.2 M4.9 0.7 L1.8 3" fill="none" stroke="#b0b0b0" stroke-width="1.15"/></svg><div style="position:absolute;left:3px;top:777.27px;font:20px/20px 'Liberation Mono', monospace;white-space:pre;transform:scaleX(0.75000) translateZ(0);transform-origin:0 0;-webkit-text-stroke:0.2px #1f2326"><span style="color:#b0b0b0">5</span></div><svg style="position:absolute;left:-6px;top:778.8px" width="7" height="14" viewBox="0 0 7 14"><path d="M4.9 0.7 V13.2 M4.9 0.7 L1.8 3" fill="none" stroke="#b0b0b0" stroke-width="1.15"/></svg><div style="position:absolute;left:22px;top:777.27px;font:20px/20px 'Liberation Mono', monospace;white-space:pre;transform:scaleX(0.75000) translateZ(0);transform-origin:0 0;-webkit-text-stroke:0.2px #1f2326"><span style="color:#bcc8fa">locker_num</span><span style="color:#e8f0f8">=</span><span style="color:#bdd36a">lt4</span><span style="color:#e8f0f8">&amp;</span><span style="color:#bcc8fa">password</span><span style="color:#e8f0f8">=</span><span style="color:#bdd36a">1</span></div></div></div><div style="position:absolute;left:315px;top:420px;width:1814px;height:933px;overflow:hidden;"><div style="position:absolute;left:10px;top:69px;width:0;height:0"><div style="position:absolute;left:-20px;top:-90px;width:2300px;height:138px;background:#25292d;"></div><div style="position:absolute;left:-8px;top:48px;width:2300px;height:1px;background:#474e56;"></div><div style="position:absolute;left:-20px;top:49px;width:2300px;height:337px;background:#23272b;"></div><div style="position:absolute;left:12px;top:13px;width:80px;height:33px;background:#2b2f37;"></div><div style="position:absolute;left:12px;top:46px;width:80px;height:2px;background:#fb826c;"></div><div style="position:absolute;left:22px;top:22.76px;font:normal 18px/18px 'Liberation Sans', sans-serif;color:#e6e6e6;white-space:pre;word-spacing:1px;-webkit-text-stroke:0.25px rgba(36,40,46,0.7);">Results</div><div style="position:absolute;left:102px;top:22.76px;font:normal 18px/18px 'Liberation Sans', sans-serif;color:#e6e6e6;white-space:pre;word-spacing:1px;-webkit-text-stroke:0.25px rgba(36,40,46,0.7);">Positions</div><svg style="position:absolute;left:12px;top:-52px" width="32" height="34" viewBox="0 0 32 34"><path d="M3.4 15.9 L19.2 3.6 Q29.4 15.9 19.2 28.2 Z" fill="none" stroke="#e6e8ea" stroke-width="2.1" stroke-linejoin="round"/><path d="M10.9 16.4 L13.8 17.8 L17 14.2 L20.4 16.3" fill="none" stroke="#e6e8ea" stroke-width="1.9" stroke-linejoin="round" stroke-linecap="round"/></svg><div style="position:absolute;left:59.5px;top:-43.63px;font:bold 21.3px/21.3px 'Liberation Sans', sans-serif;color:#ffffff;white-space:pre;word-spacing:1px;-webkit-text-stroke:0.25px rgba(36,40,46,0.7);word-spacing:1.2px">8. Intruder attack of http://host8.dreamhack.games:14357</div><svg style="position:absolute;left:652px;top:-48.5px" width="30" height="28" viewBox="0 0 30 28"><path d="M4 22.5 L5.6 16.6 L19.6 2.6 Q21 1.2 22.4 2.6 L25.4 5.6 Q26.8 7 25.4 8.4 L11.4 22.4 Z M17.6 4.6 L23.4 10.4" fill="none" stroke="#6f7e8c" stroke-width="1.9" stroke-linejoin="round"/></svg><div style="position:absolute;left:12px;top:59px;width:2300px;height:33px;background:#3d3d3d;border:1px solid #fb826c;border-radius:4px"></div><svg style="position:absolute;left:21px;top:66px" width="22" height="20" viewBox="0 0 22 20"><path d="M1.5 1.5 H20 L13 10 V18.5 L9 16.5 V10 Z" fill="none" stroke="#9b9b9b" stroke-width="1.9" stroke-linejoin="round"/></svg><div style="position:absolute;left:47px;top:68.96px;font:normal 18px/18px 'Liberation Sans', sans-serif;color:#e6e6e6;white-space:pre;word-spacing:1px;-webkit-text-stroke:0.25px rgba(36,40,46,0.7);">Capture filter: Capturing all items</div><div style="position:absolute;left:12px;top:104px;width:2300px;height:33px;background:#3d3d3d;border:1px solid #fb826c;border-radius:4px"></div><svg style="position:absolute;left:21px;top:111px" width="22" height="20" viewBox="0 0 22 20"><path d="M1.5 1.5 H20 L13 10 V18.5 L9 16.5 V10 Z" fill="none" stroke="#9b9b9b" stroke-width="1.9" stroke-linejoin="round"/></svg><div style="position:absolute;left:47px;top:113.96px;font:normal 18px/18px 'Liberation Sans', sans-serif;color:#e6e6e6;white-space:pre;word-spacing:1px;-webkit-text-stroke:0.25px rgba(36,40,46,0.7);">View filter: Showing all items</div><div style="position:absolute;left:12px;top:149px;width:2300px;height:229px;border:3px solid #fb826c;border-radius:3px;background:#262a2e"></div><div style="position:absolute;left:15px;top:152px;width:2300px;height:33px;background:#39404a;"></div><div style="position:absolute;left:20.8px;top:160.76px;font:normal 18px/18px 'Liberation Sans', sans-serif;color:#e6e6e6;white-space:pre;word-spacing:1px;-webkit-text-stroke:0.25px rgba(36,40,46,0.7);">Request</div><div style="position:absolute;left:240.9px;top:160.76px;font:normal 18px/18px 'Liberation Sans', sans-serif;color:#e6e6e6;white-space:pre;word-spacing:1px;-webkit-text-stroke:0.25px rgba(36,40,46,0.7);">Payload</div><div style="position:absolute;left:807.5px;top:160.76px;font:normal 18px/18px 'Liberation Sans', sans-serif;color:#e6e6e6;white-space:pre;word-spacing:1px;-webkit-text-stroke:0.25px rgba(36,40,46,0.7);">Status code</div><div style="position:absolute;left:1079.6px;top:160.76px;font:normal 18px/18px 'Liberation Sans', sans-serif;color:#e6e6e6;white-space:pre;word-spacing:1px;-webkit-text-stroke:0.25px rgba(36,40,46,0.7);">Response received</div><div style="position:absolute;left:1304.8px;top:160.76px;font:normal 18px/18px 'Liberation Sans', sans-serif;color:#e6e6e6;white-space:pre;word-spacing:1px;-webkit-text-stroke:0.25px rgba(36,40,46,0.7);">Error</div><div style="position:absolute;left:1485.7px;top:160.76px;font:normal 18px/18px 'Liberation Sans', sans-serif;color:#e6e6e6;white-space:pre;word-spacing:1px;-webkit-text-stroke:0.25px rgba(36,40,46,0.7);">Timeout</div><div style="position:absolute;left:1667px;top:160.76px;font:normal 18px/18px 'Liberation Sans', sans-serif;color:#e6e6e6;white-space:pre;word-spacing:1px;-webkit-text-stroke:0.25px rgba(36,40,46,0.7);">Length</div><div style="position:absolute;left:1894px;top:160.76px;font:normal 18px/18px 'Liberation Sans', sans-serif;color:#e6e6e6;white-space:pre;word-spacing:1px;-webkit-text-stroke:0.25px rgba(36,40,46,0.7);">Comment</div><svg style="position:absolute;left:1726.5px;top:165.5px" width="10" height="7" viewBox="0 0 10 7"><path d="M0.3 5.6 L4.65 0.4 L9 5.6 Z" fill="#ececec"/></svg><div style="position:absolute;left:15px;top:185px;width:2300px;height:28px;background:#2866a5;"></div><div style="position:absolute;left:16px;top:186px;width:2300px;height:26px;background:#2a2e35;"></div><div style="position:absolute;left:24.6px;top:191.76px;font:normal 18px/18px 'Liberation Sans', sans-serif;color:#f2f2f2;white-space:pre;word-spacing:1px;-webkit-text-stroke:0.25px rgba(36,40,46,0.7);">10</div><div style="position:absolute;left:244.70000000000002px;top:191.76px;font:normal 18px/18px 'Liberation Sans', sans-serif;color:#f2f2f2;white-space:pre;word-spacing:1px;-webkit-text-stroke:0.25px rgba(36,40,46,0.7);">j</div><div style="position:absolute;left:811.3px;top:191.76px;font:normal 18px/18px 'Liberation Sans', sans-serif;color:#f2f2f2;white-space:pre;word-spacing:1px;-webkit-text-stroke:0.25px rgba(36,40,46,0.7);">200</div><div style="position:absolute;left:1083.3999999999999px;top:191.76px;font:normal 18px/18px 'Liberation Sans', sans-serif;color:#f2f2f2;white-space:pre;word-spacing:1px;-webkit-text-stroke:0.25px rgba(36,40,46,0.7);">4</div><div style="position:absolute;left:1670.8px;top:191.76px;font:normal 18px/18px 'Liberation Sans', sans-serif;color:#f2f2f2;white-space:pre;word-spacing:1px;-webkit-text-stroke:0.25px rgba(36,40,46,0.7);">1951</div><div style="position:absolute;left:15px;top:213px;width:2300px;height:28px;background:#262a2e;"></div><div style="position:absolute;left:24.6px;top:219.76px;font:normal 18px/18px 'Liberation Sans', sans-serif;color:#e6e6e6;white-space:pre;word-spacing:1px;-webkit-text-stroke:0.25px rgba(36,40,46,0.7);">0</div><div style="position:absolute;left:811.3px;top:219.76px;font:normal 18px/18px 'Liberation Sans', sans-serif;color:#e6e6e6;white-space:pre;word-spacing:1px;-webkit-text-stroke:0.25px rgba(36,40,46,0.7);">200</div><div style="position:absolute;left:1083.3999999999999px;top:219.76px;font:normal 18px/18px 'Liberation Sans', sans-serif;color:#e6e6e6;white-space:pre;word-spacing:1px;-webkit-text-stroke:0.25px rgba(36,40,46,0.7);">5</div><div style="position:absolute;left:1670.8px;top:219.76px;font:normal 18px/18px 'Liberation Sans', sans-serif;color:#e6e6e6;white-space:pre;word-spacing:1px;-webkit-text-stroke:0.25px rgba(36,40,46,0.7);">1953</div><div style="position:absolute;left:15px;top:241px;width:2300px;height:28px;background:#1f2226;"></div><div style="position:absolute;left:24.6px;top:247.76px;font:normal 18px/18px 'Liberation Sans', sans-serif;color:#e6e6e6;white-space:pre;word-spacing:1px;-webkit-text-stroke:0.25px rgba(36,40,46,0.7);">1</div><div style="position:absolute;left:244.70000000000002px;top:247.76px;font:normal 18px/18px 'Liberation Sans', sans-serif;color:#e6e6e6;white-space:pre;word-spacing:1px;-webkit-text-stroke:0.25px rgba(36,40,46,0.7);">a</div><div style="position:absolute;left:811.3px;top:247.76px;font:normal 18px/18px 'Liberation Sans', sans-serif;color:#e6e6e6;white-space:pre;word-spacing:1px;-webkit-text-stroke:0.25px rgba(36,40,46,0.7);">200</div><div style="position:absolute;left:1083.3999999999999px;top:247.76px;font:normal 18px/18px 'Liberation Sans', sans-serif;color:#e6e6e6;white-space:pre;word-spacing:1px;-webkit-text-stroke:0.25px rgba(36,40,46,0.7);">8</div><div style="position:absolute;left:1670.8px;top:247.76px;font:normal 18px/18px 'Liberation Sans', sans-serif;color:#e6e6e6;white-space:pre;word-spacing:1px;-webkit-text-stroke:0.25px rgba(36,40,46,0.7);">1953</div><div style="position:absolute;left:15px;top:269px;width:2300px;height:28px;background:#262a2e;"></div><div style="position:absolute;left:24.6px;top:275.76px;font:normal 18px/18px 'Liberation Sans', sans-serif;color:#e6e6e6;white-space:pre;word-spacing:1px;-webkit-text-stroke:0.25px rgba(36,40,46,0.7);">2</div><div style="position:absolute;left:244.70000000000002px;top:275.76px;font:normal 18px/18px 'Liberation Sans', sans-serif;color:#e6e6e6;white-space:pre;word-spacing:1px;-webkit-text-stroke:0.25px rgba(36,40,46,0.7);">b</div><div style="position:absolute;left:811.3px;top:275.76px;font:normal 18px/18px 'Liberation Sans', sans-serif;color:#e6e6e6;white-space:pre;word-spacing:1px;-webkit-text-stroke:0.25px rgba(36,40,46,0.7);">200</div><div style="position:absolute;left:1083.3999999999999px;top:275.76px;font:normal 18px/18px 'Liberation Sans', sans-serif;color:#e6e6e6;white-space:pre;word-spacing:1px;-webkit-text-stroke:0.25px rgba(36,40,46,0.7);">10</div><div style="position:absolute;left:1670.8px;top:275.76px;font:normal 18px/18px 'Liberation Sans', sans-serif;color:#e6e6e6;white-space:pre;word-spacing:1px;-webkit-text-stroke:0.25px rgba(36,40,46,0.7);">1953</div><div style="position:absolute;left:15px;top:297px;width:2300px;height:28px;background:#1f2226;"></div><div style="position:absolute;left:24.6px;top:303.76px;font:normal 18px/18px 'Liberation Sans', sans-serif;color:#e6e6e6;white-space:pre;word-spacing:1px;-webkit-text-stroke:0.25px rgba(36,40,46,0.7);">3</div><div style="position:absolute;left:244.70000000000002px;top:303.76px;font:normal 18px/18px 'Liberation Sans', sans-serif;color:#e6e6e6;white-space:pre;word-spacing:1px;-webkit-text-stroke:0.25px rgba(36,40,46,0.7);">c</div><div style="position:absolute;left:811.3px;top:303.76px;font:normal 18px/18px 'Liberation Sans', sans-serif;color:#e6e6e6;white-space:pre;word-spacing:1px;-webkit-text-stroke:0.25px rgba(36,40,46,0.7);">200</div><div style="position:absolute;left:1083.3999999999999px;top:303.76px;font:normal 18px/18px 'Liberation Sans', sans-serif;color:#e6e6e6;white-space:pre;word-spacing:1px;-webkit-text-stroke:0.25px rgba(36,40,46,0.7);">5</div><div style="position:absolute;left:1670.8px;top:303.76px;font:normal 18px/18px 'Liberation Sans', sans-serif;color:#e6e6e6;white-space:pre;word-spacing:1px;-webkit-text-stroke:0.25px rgba(36,40,46,0.7);">1953</div><div style="position:absolute;left:15px;top:325px;width:2300px;height:28px;background:#262a2e;"></div><div style="position:absolute;left:24.6px;top:331.76px;font:normal 18px/18px 'Liberation Sans', sans-serif;color:#e6e6e6;white-space:pre;word-spacing:1px;-webkit-text-stroke:0.25px rgba(36,40,46,0.7);">4</div><div style="position:absolute;left:244.70000000000002px;top:331.76px;font:normal 18px/18px 'Liberation Sans', sans-serif;color:#e6e6e6;white-space:pre;word-spacing:1px;-webkit-text-stroke:0.25px rgba(36,40,46,0.7);">d</div><div style="position:absolute;left:811.3px;top:331.76px;font:normal 18px/18px 'Liberation Sans', sans-serif;color:#e6e6e6;white-space:pre;word-spacing:1px;-webkit-text-stroke:0.25px rgba(36,40,46,0.7);">200</div><div style="position:absolute;left:1083.3999999999999px;top:331.76px;font:normal 18px/18px 'Liberation Sans', sans-serif;color:#e6e6e6;white-space:pre;word-spacing:1px;-webkit-text-stroke:0.25px rgba(36,40,46,0.7);">6</div><div style="position:absolute;left:1670.8px;top:331.76px;font:normal 18px/18px 'Liberation Sans', sans-serif;color:#e6e6e6;white-space:pre;word-spacing:1px;-webkit-text-stroke:0.25px rgba(36,40,46,0.7);">1953</div><div style="position:absolute;left:15px;top:353px;width:2300px;height:28px;background:#1f2226;"></div><div style="position:absolute;left:24.6px;top:359.76px;font:normal 18px/18px 'Liberation Sans', sans-serif;color:#e6e6e6;white-space:pre;word-spacing:1px;-webkit-text-stroke:0.25px rgba(36,40,46,0.7);">5</div><div style="position:absolute;left:244.70000000000002px;top:359.76px;font:normal 18px/18px 'Liberation Sans', sans-serif;color:#e6e6e6;white-space:pre;word-spacing:1px;-webkit-text-stroke:0.25px rgba(36,40,46,0.7);">e</div><div style="position:absolute;left:811.3px;top:359.76px;font:normal 18px/18px 'Liberation Sans', sans-serif;color:#e6e6e6;white-space:pre;word-spacing:1px;-webkit-text-stroke:0.25px rgba(36,40,46,0.7);">200</div><div style="position:absolute;left:1083.3999999999999px;top:359.76px;font:normal 18px/18px 'Liberation Sans', sans-serif;color:#e6e6e6;white-space:pre;word-spacing:1px;-webkit-text-stroke:0.25px rgba(36,40,46,0.7);">8</div><div style="position:absolute;left:1670.8px;top:359.76px;font:normal 18px/18px 'Liberation Sans', sans-serif;color:#e6e6e6;white-space:pre;word-spacing:1px;-webkit-text-stroke:0.25px rgba(36,40,46,0.7);">1953</div><div style="position:absolute;left:-20px;top:385px;width:2300px;height:1px;background:#23272b;"></div><div style="position:absolute;left:-8px;top:386px;width:2300px;height:1px;background:#66686a;"></div><div style="position:absolute;left:-20px;top:387px;width:2300px;height:37px;background:#25292c;"></div><div style="position:absolute;left:-8px;top:389px;width:89px;height:33px;background:#2d3139;"></div><div style="position:absolute;left:-8px;top:422px;width:89px;height:2px;background:#fb826c;"></div><div style="position:absolute;left:-8px;top:424px;width:2300px;height:1px;background:#474e56;"></div><div style="position:absolute;left:3px;top:399.16px;font:normal 18px/18px 'Liberation Sans', sans-serif;color:#e6e6e6;white-space:pre;word-spacing:1px;-webkit-text-stroke:0.25px rgba(36,40,46,0.7);">Request</div><div style="position:absolute;left:91.5px;top:399.16px;font:normal 18px/18px 'Liberation Sans', sans-serif;color:#e6e6e6;white-space:pre;word-spacing:1px;-webkit-text-stroke:0.25px rgba(36,40,46,0.7);">Response</div><div style="position:absolute;left:-20px;top:425px;width:2300px;height:40px;background:#202427;"></div><div style="position:absolute;left:-8px;top:430px;width:67px;height:33px;background:#2d3239;"></div><div style="position:absolute;left:-8px;top:463px;width:67px;height:2px;background:#fb826c;"></div><div style="position:absolute;left:-8px;top:465px;width:2300px;height:1px;background:#474e56;"></div><div style="position:absolute;left:3px;top:440.16px;font:normal 18px/18px 'Liberation Sans', sans-serif;color:#e6e6e6;white-space:pre;word-spacing:1px;-webkit-text-stroke:0.25px rgba(36,40,46,0.7);">Pretty</div><div style="position:absolute;left:70px;top:440.16px;font:normal 18px/18px 'Liberation Sans', sans-serif;color:#8e97a0;white-space:pre;word-spacing:1px;-webkit-text-stroke:0.25px rgba(36,40,46,0.7);">Raw</div><div style="position:absolute;left:123px;top:440.16px;font:normal 18px/18px 'Liberation Sans', sans-serif;color:#8e97a0;white-space:pre;word-spacing:1px;-webkit-text-stroke:0.25px rgba(36,40,46,0.7);">Hex</div><div style="position:absolute;left:-20px;top:466px;width:2300px;height:1200px;background:#1f2326;"></div><div style="position:absolute;left:16px;top:466px;width:1px;height:1200px;background:#5c5f62;"></div><div style="position:absolute;left:3px;top:469.28px;font:20px/20px 'Liberation Mono', monospace;white-space:pre;transform:scaleX(0.75000) translateZ(0);transform-origin:0 0;-webkit-text-stroke:0.2px #1f2326"><span style="color:#b0b0b0">1</span></div><div style="position:absolute;left:22px;top:469.28px;font:20px/20px 'Liberation Mono', monospace;white-space:pre;transform:scaleX(0.75000) translateZ(0);transform-origin:0 0;-webkit-text-stroke:0.2px #1f2326"><span style="color:#eaf4ff">POST / HTTP/1.1</span></div><div style="position:absolute;left:3px;top:491.28px;font:20px/20px 'Liberation Mono', monospace;white-space:pre;transform:scaleX(0.75000) translateZ(0);transform-origin:0 0;-webkit-text-stroke:0.2px #1f2326"><span style="color:#b0b0b0">2</span></div><div style="position:absolute;left:22px;top:491.28px;font:20px/20px 'Liberation Mono', monospace;white-space:pre;transform:scaleX(0.75000) translateZ(0);transform-origin:0 0;-webkit-text-stroke:0.2px #1f2326"><span style="color:#eaf4ff">Host: </span><span style="color:#d4d4d0">host8.dreamhack.games:14357</span></div><div style="position:absolute;left:3px;top:513.27px;font:20px/20px 'Liberation Mono', monospace;white-space:pre;transform:scaleX(0.75000) translateZ(0);transform-origin:0 0;-webkit-text-stroke:0.2px #1f2326"><span style="color:#b0b0b0">3</span></div><div style="position:absolute;left:22px;top:513.27px;font:20px/20px 'Liberation Mono', monospace;white-space:pre;transform:scaleX(0.75000) translateZ(0);transform-origin:0 0;-webkit-text-stroke:0.2px #1f2326"><span style="color:#eaf4ff">Content-Length: </span><span style="color:#d4d4d0">26</span></div><div style="position:absolute;left:3px;top:535.27px;font:20px/20px 'Liberation Mono', monospace;white-space:pre;transform:scaleX(0.75000) translateZ(0);transform-origin:0 0;-webkit-text-stroke:0.2px #1f2326"><span style="color:#b0b0b0">4</span></div><div style="position:absolute;left:22px;top:535.27px;font:20px/20px 'Liberation Mono', monospace;white-space:pre;transform:scaleX(0.75000) translateZ(0);transform-origin:0 0;-webkit-text-stroke:0.2px #1f2326"><span style="color:#eaf4ff">Cache-Control: </span><span style="color:#d4d4d0">max-age=0</span></div><div style="position:absolute;left:3px;top:557.27px;font:20px/20px 'Liberation Mono', monospace;white-space:pre;transform:scaleX(0.75000) translateZ(0);transform-origin:0 0;-webkit-text-stroke:0.2px #1f2326"><span style="color:#b0b0b0">5</span></div><div style="position:absolute;left:22px;top:557.27px;font:20px/20px 'Liberation Mono', monospace;white-space:pre;transform:scaleX(0.75000) translateZ(0);transform-origin:0 0;-webkit-text-stroke:0.2px #1f2326"><span style="color:#eaf4ff">Origin: </span><span style="color:#d4d4d0">http://host8.dreamhack.games:14357</span></div><div style="position:absolute;left:3px;top:579.27px;font:20px/20px 'Liberation Mono', monospace;white-space:pre;transform:scaleX(0.75000) translateZ(0);transform-origin:0 0;-webkit-text-stroke:0.2px #1f2326"><span style="color:#b0b0b0">6</span></div><div style="position:absolute;left:22px;top:579.27px;font:20px/20px 'Liberation Mono', monospace;white-space:pre;transform:scaleX(0.75000) translateZ(0);transform-origin:0 0;-webkit-text-stroke:0.2px #1f2326"><span style="color:#eaf4ff">Content-Type: </span><span style="color:#d4d4d0">application/x-www-form-urlencoded</span></div><div style="position:absolute;left:3px;top:601.27px;font:20px/20px 'Liberation Mono', monospace;white-space:pre;transform:scaleX(0.75000) translateZ(0);transform-origin:0 0;-webkit-text-stroke:0.2px #1f2326"><span style="color:#b0b0b0">7</span></div><div style="position:absolute;left:22px;top:601.27px;font:20px/20px 'Liberation Mono', monospace;white-space:pre;transform:scaleX(0.75000) translateZ(0);transform-origin:0 0;-webkit-text-stroke:0.2px #1f2326"><span style="color:#eaf4ff">Upgrade-Insecure-Requests: </span><span style="color:#d4d4d0">1</span></div><div style="position:absolute;left:3px;top:623.27px;font:20px/20px 'Liberation Mono', monospace;white-space:pre;transform:scaleX(0.75000) translateZ(0);transform-origin:0 0;-webkit-text-stroke:0.2px #1f2326"><span style="color:#b0b0b0">8</span></div><div style="position:absolute;left:22px;top:623.27px;font:20px/20px 'Liberation Mono', monospace;white-space:pre;transform:scaleX(0.75000) translateZ(0);transform-origin:0 0;-webkit-text-stroke:0.2px #1f2326"><span style="color:#eaf4ff">User-Agent: </span><span style="color:#d4d4d0">Mozilla/5.0 (Windows NT 10.0; Win64; x64) AppleWebKit/537.36 (KHTML, like Gecko) Chrome/141.0.0.0 Safari/537.36</span></div><div style="position:absolute;left:3px;top:645.27px;font:20px/20px 'Liberation Mono', monospace;white-space:pre;transform:scaleX(0.75000) translateZ(0);transform-origin:0 0;-webkit-text-stroke:0.2px #1f2326"><span style="color:#b0b0b0">9</span></div><div style="position:absolute;left:22px;top:645.27px;font:20px/20px 'Liberation Mono', monospace;white-space:pre;transform:scaleX(0.75000) translateZ(0);transform-origin:0 0;-webkit-text-stroke:0.2px #1f2326"><span style="color:#eaf4ff">Accept: </span><span style="color:#d4d4d0">text/html,application/xhtml+xml,application/xml;q=0.9,image/avif,image/webp,image/apng,*/*;q=0.8,application/signed-exchange;v=b3;q=0.7</span></div><div style="position:absolute;left:3px;top:667.27px;font:20px/20px 'Liberation Mono', monospace;white-space:pre;transform:scaleX(0.75000) translateZ(0);transform-origin:0 0;-webkit-text-stroke:0.2px #1f2326"><span style="color:#b0b0b0">0</span></div><svg style="position:absolute;left:-6px;top:668.8px" width="7" height="14" viewBox="0 0 7 14"><path d="M4.9 0.7 V13.2 M4.9 0.7 L1.8 3" fill="none" stroke="#b0b0b0" stroke-width="1.15"/></svg><div style="position:absolute;left:22px;top:667.27px;font:20px/20px 'Liberation Mono', monospace;white-space:pre;transform:scaleX(0.75000) translateZ(0);transform-origin:0 0;-webkit-text-stroke:0.2px #1f2326"><span style="color:#eaf4ff">Referer: </span><span style="color:#d4d4d0">http://host8.dreamhack.games:14357/</span></div><div style="position:absolute;left:3px;top:689.27px;font:20px/20px 'Liberation Mono', monospace;white-space:pre;transform:scaleX(0.75000) translateZ(0);transform-origin:0 0;-webkit-text-stroke:0.2px #1f2326"><span style="color:#b0b0b0">1</span></div><svg style="position:absolute;left:-6px;top:690.8px" width="7" height="14" viewBox="0 0 7 14"><path d="M4.9 0.7 V13.2 M4.9 0.7 L1.8 3" fill="none" stroke="#b0b0b0" stroke-width="1.15"/></svg><div style="position:absolute;left:22px;top:689.27px;font:20px/20px 'Liberation Mono', monospace;white-space:pre;transform:scaleX(0.75000) translateZ(0);transform-origin:0 0;-webkit-text-stroke:0.2px #1f2326"><span style="color:#eaf4ff">Accept-Encoding: </span><span style="color:#d4d4d0">gzip, deflate, br</span></div><div style="position:absolute;left:3px;top:711.27px;font:20px/20px 'Liberation Mono', monospace;white-space:pre;transform:scaleX(0.75000) translateZ(0);transform-origin:0 0;-webkit-text-stroke:0.2px #1f2326"><span style="color:#b0b0b0">2</span></div><svg style="position:absolute;left:-6px;top:712.8px" width="7" height="14" viewBox="0 0 7 14"><path d="M4.9 0.7 V13.2 M4.9 0.7 L1.8 3" fill="none" stroke="#b0b0b0" stroke-width="1.15"/></svg><div style="position:absolute;left:22px;top:711.27px;font:20px/20px 'Liberation Mono', monospace;white-space:pre;transform:scaleX(0.75000) translateZ(0);transform-origin:0 0;-webkit-text-stroke:0.2px #1f2326"><span style="color:#eaf4ff">Accept-Language: </span><span style="color:#d4d4d0">ko-KR,ko;q=0.9,en-US;q=0.8,en;q=0.7</span></div><div style="position:absolute;left:3px;top:733.27px;font:20px/20px 'Liberation Mono', monospace;white-space:pre;transform:scaleX(0.75000) translateZ(0);transform-origin:0 0;-webkit-text-stroke:0.2px #1f2326"><span style="color:#b0b0b0">3</span></div><svg style="position:absolute;left:-6px;top:734.8px" width="7" height="14" viewBox="0 0 7 14"><path d="M4.9 0.7 V13.2 M4.9 0.7 L1.8 3" fill="none" stroke="#b0b0b0" stroke-width="1.15"/></svg><div style="position:absolute;left:22px;top:733.27px;font:20px/20px 'Liberation Mono', monospace;white-space:pre;transform:scaleX(0.75000) translateZ(0);transform-origin:0 0;-webkit-text-stroke:0.2px #1f2326"><span style="color:#eaf4ff">Connection: </span><span style="color:#d4d4d0">keep-alive</span></div><div style="position:absolute;left:3px;top:755.27px;font:20px/20px 'Liberation Mono', monospace;white-space:pre;transform:scaleX(0.75000) translateZ(0);transform-origin:0 0;-webkit-text-stroke:0.2px #1f2326"><span style="color:#b0b0b0">4</span></div><svg style="position:absolute;left:-6px;top:756.8px" width="7" height="14" viewBox="0 0 7 14"><path d="M4.9 0.7 V13.2 M4.9 0.7 L1.8 3" fill="none" stroke="#b0b0b0" stroke-width="1.15"/></svg><div style="position:absolute;left:3px;top:777.27px;font:20px/20px 'Liberation Mono', monospace;white-space:pre;transform:scaleX(0.75000) translateZ(0);transform-origin:0 0;-webkit-text-stroke:0.2px #1f2326"><span style="color:#b0b0b0">5</span></div><svg style="position:absolute;left:-6px;top:778.8px" width="7" height="14" viewBox="0 0 7 14"><path d="M4.9 0.7 V13.2 M4.9 0.7 L1.8 3" fill="none" stroke="#b0b0b0" stroke-width="1.15"/></svg><div style="position:absolute;left:22px;top:777.27px;font:20px/20px 'Liberation Mono', monospace;white-space:pre;transform:scaleX(0.75000) translateZ(0);transform-origin:0 0;-webkit-text-stroke:0.2px #1f2326"><span style="color:#bcc8fa">locker_num</span><span style="color:#e8f0f8">=</span><span style="color:#bdd36a">lt4j</span><span style="color:#e8f0f8">&amp;</span><span style="color:#bcc8fa">password</span><span style="color:#e8f0f8">=</span><span style="color:#bdd36a">1</span></div></div></div><div style="position:absolute;left:316px;top:424px;width:1px;height:929px;background:#4f5459;"></div><div style="position:absolute;left:17px;top:767px;width:130px;height:32px;border:3px solid #ee1d25"></div><div style="position:absolute;left:172px;top:976px;width:136px;height:28px;border:3px solid #ee1d25"></div><div style="position:absolute;left:339px;top:1260px;width:143px;height:25px;border:3px solid #ee1d25"></div>
</body></html>
